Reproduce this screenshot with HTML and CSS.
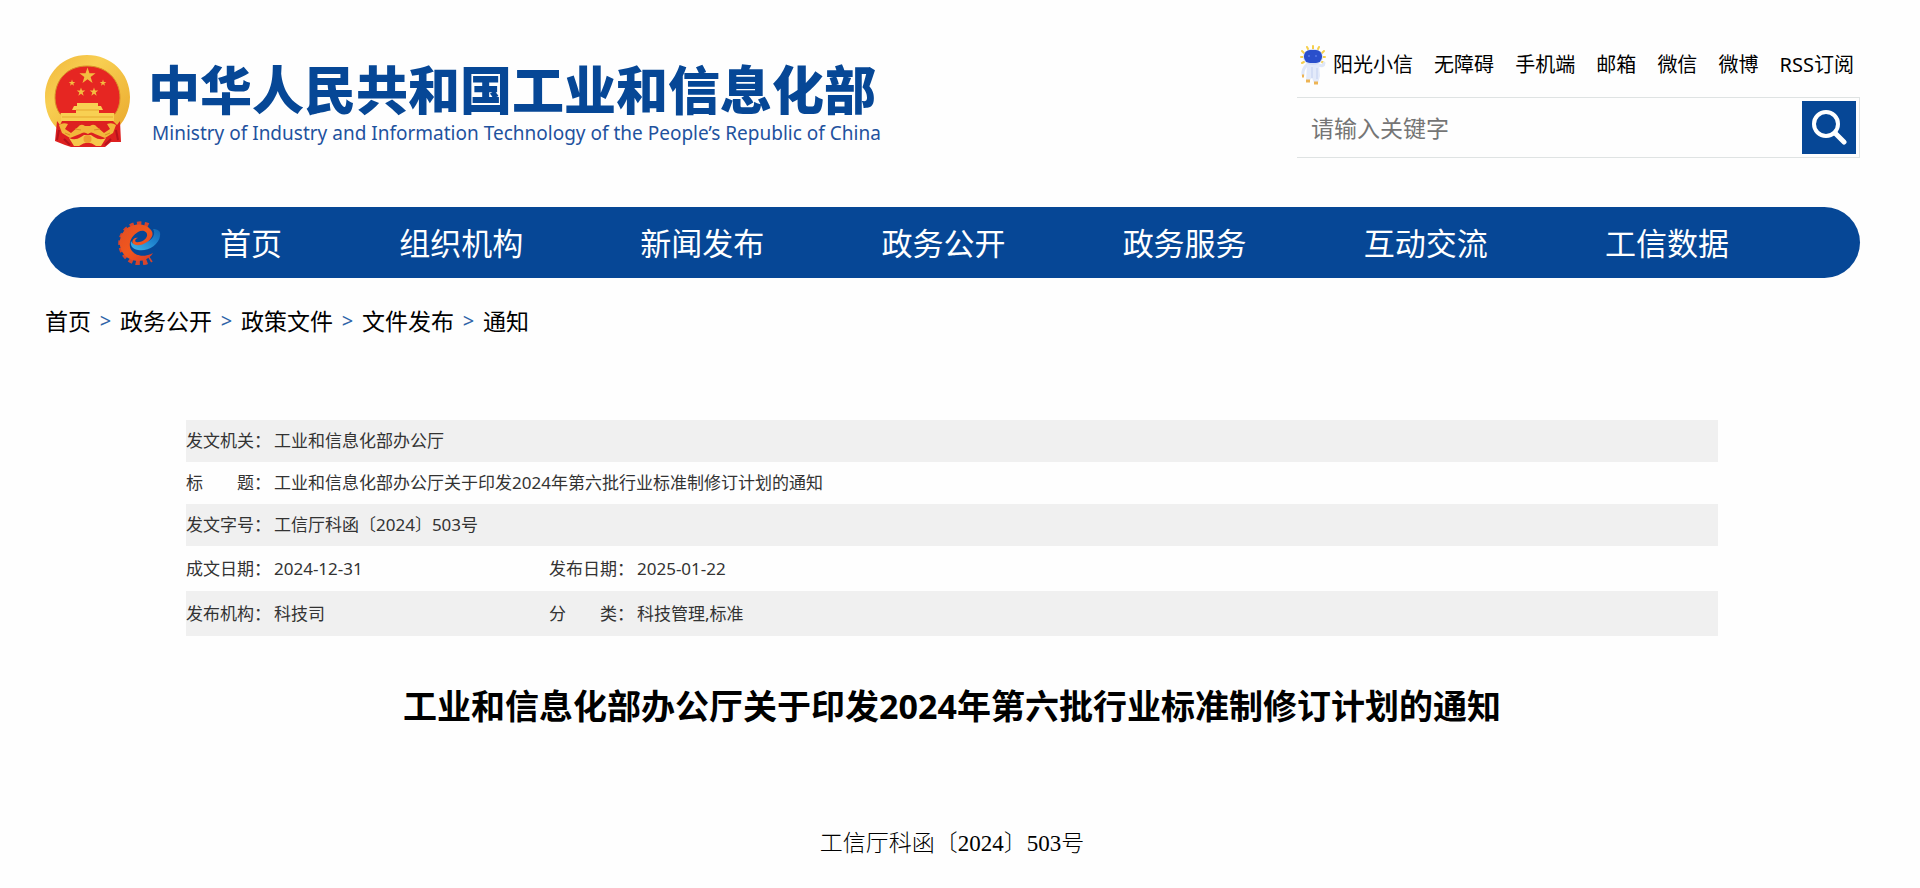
FILE: index.html
```html
<!DOCTYPE html>
<html lang="zh-CN">
<head>
<meta charset="utf-8">
<meta name="viewport" content="width=device-width, initial-scale=1">
<title>工业和信息化部办公厅关于印发2024年第六批行业标准制修订计划的通知</title>
<link rel="stylesheet" href="styles.css">
</head>
<body>
<div class="page">
  <header class="header">
    <a class="brand" href="#">
      <svg class="emblem" viewBox="0 0 85 93" aria-hidden="true">
        <defs>
          <linearGradient id="gold" x1="0" y1="0" x2="1" y2="1">
            <stop offset="0" stop-color="#f0b53a"/><stop offset=".35" stop-color="#f8cf52"/><stop offset="1" stop-color="#eaa92d"/>
          </linearGradient>
          <path id="star" d="M0-10 2.3-3.1 9.5-3.1 3.7 1.2 5.9 8.1 0 3.9-5.9 8.1-3.7 1.2-9.5-3.1-2.3-3.1Z"/>
        </defs>
        <path d="M42 0C66 0 85 18 85 42 85 56 79 68 69 76L54 71H30L15 76C5 68 0 56 0 42 0 18 18 0 42 0Z" fill="url(#gold)"/>
        <path d="M42 11C61 11 75 24 75 43 75 49 73 55 70 59H15C12 55 10 49 10 43 10 24 23 11 42 11Z" fill="#e62622" stroke="#d99128"/>
        <g fill="#f3bd40"><use href="#star" transform="translate(42.500 21) scale(.85)"/><use href="#star" transform="translate(27 28) scale(.35)"/><use href="#star" transform="translate(58 28) scale(.35)"/><use href="#star" transform="translate(36 37) scale(.45)"/><use href="#star" transform="translate(49 37) scale(.45)"/></g>
        <path d="M32 48H53V51H56L58 55H54V58H69V66H16V58H31V55H27L29 51H32Z" fill="#f8d052"/>
        <path d="M31 55H54M17 62H68" stroke="#e6a82e"/>
        <path d="M17 66H68L72 70 75 66 76 87 66 87 60 92H26L20 90 10 86 12 66 15 70Z" fill="#dd2020"/>
        <path d="M14 75 12 85M19 84 25 90M71 75 73 85M66 84 60 90" fill="none" stroke="#b5121b" stroke-width="2"/>
        <path d="M14 70Q18 67 23 69L20 74 26 78 33 72Q36 68 40 71H45Q49 68 52 72L59 78 65 74 62 69Q67 67 71 70L68 78 60 83 50 79Q46 76 43 79 39 76 35 79L25 83 17 78Z" fill="#f2b73b"/>
        <path d="M30 74 36 75M55 74 49 75M20 78 25 80M65 78 60 80" stroke="#d98e26"/>
        <path d="M24 83Q30 86 36 82L39 80H46L49 82Q55 86 61 83L56 91H51Q43 84 34 91H29Z" fill="#f6c84c"/>
        <circle cx="42.500" cy="84" r="4" fill="#ee9d30"/>
      </svg>
      <span class="brand-text">
        <span class="brand-zh">中华人民共和国工业和信息化部</span>
        <span class="brand-en" lang="en">Ministry of Industry and Information Technology of the People’s Republic of China</span>
      </span>
    </a>
    <div class="tools">
      <ul class="links">
        <li><a class="mascot-link" href="#">
          <svg class="mascot" viewBox="0 0 26 40" aria-hidden="true">
            <g stroke="#f6cf4b" stroke-width="2" stroke-linecap="round"><path d="M13 1V4M7 2 8 4M19 2 18 4M2 6 4 8M24 6 22 8M1 12H3M25 12H23M2 18 4 17M24 18 22 17"/></g>
            <path d="M8 19Q2 24 3 30M18 20Q24 22 24 18" fill="none" stroke="#dfe7f8" stroke-width="3" stroke-linecap="round"/>
            <path d="M7 19H19L20 31 18 38H14L12 33 9 36H6Z" fill="#e3eafa"/>
            <path d="M12 22V33M17 23V34" stroke="#c3d0f0"/>
            <ellipse cx="13" cy="12" rx="10" ry="8" fill="#d5def5"/>
            <rect x="4" y="5" width="18" height="13" rx="6" fill="#2a4fcb"/>
            <path d="M8 11H10M15 11H17" stroke="#4a6de0" stroke-width="2"/>
            <path d="M6 36H10M14 38H18M2 31H4" stroke="#edb454" stroke-width="3"/>
          </svg>阳光小信</a></li>
        <li><a href="#">无障碍</a></li>
        <li><a href="#">手机端</a></li>
        <li><a href="#">邮箱</a></li>
        <li><a href="#">微信</a></li>
        <li><a href="#">微博</a></li>
        <li><a href="#">RSS订阅</a></li>
      </ul>
      <form class="search">
        <input class="search-input" type="text" aria-label="请输入关键字" placeholder="请输入关键字">
        <button class="search-button" type="button" aria-label="搜索">
          <svg class="search-icon" viewBox="0 0 36 36" aria-hidden="true"><circle cx="15" cy="14" r="12" fill="none" stroke="#fff" stroke-width="4"/><path d="M24 23 33 32" stroke="#fff" stroke-width="5" stroke-linecap="round"/></svg>
        </button>
      </form>
    </div>
  </header>

  <nav class="nav" aria-label="主导航">
    <svg class="gear" viewBox="0 0 45 44" aria-hidden="true">
      <defs>
        <linearGradient id="swoosh" x1="0" y1="1" x2="1" y2="0"><stop offset="0" stop-color="#42b5e7"/><stop offset=".6" stop-color="#1e82cd"/><stop offset="1" stop-color="#1264ae"/></linearGradient>
        <linearGradient id="flame" x1="0" y1="0" x2="1" y2="1"><stop offset="0" stop-color="#e04e27"/><stop offset=".5" stop-color="#f2571c"/><stop offset="1" stop-color="#d93a29"/></linearGradient>
      </defs>
      <path d="M32 5A19 19 0 1 0 35 38" fill="none" stroke="#d4452d" stroke-width="6" stroke-dasharray="4 3"/>
      <path d="M35 9C29 1 15 2 8 10 1 19 3 31 12 37 22 43 33 39 37 32 30 36 21 36 16 30 11 24 15 15 22 11 27 8 32 11 31 15 30 19 24 22 20 21 18 20 20 17 22 17 18 16 15 20 17 23 21 28 32 23 35 17 37 14 37 12 35 9Z" fill="url(#flame)"/>
      <path d="M37 8C42 8 45 10 44 15 43 24 31 31 22 29 16 28 14 24 15 20 18 26 25 25 31 21 37 18 40 13 37 8Z" fill="url(#swoosh)"/>
    </svg>
    <ul class="nav-list">
      <li><a href="#">首页</a></li>
      <li><a href="#">组织机构</a></li>
      <li><a href="#">新闻发布</a></li>
      <li><a href="#">政务公开</a></li>
      <li><a href="#">政务服务</a></li>
      <li><a href="#">互动交流</a></li>
      <li><a href="#">工信数据</a></li>
    </ul>
  </nav>

  <nav class="crumbs" aria-label="当前位置">
    <a href="#">首页</a><span class="sep">&gt;</span><a href="#">政务公开</a><span class="sep">&gt;</span><a href="#">政策文件</a><span class="sep">&gt;</span><a href="#">文件发布</a><span class="sep">&gt;</span><a href="#">通知</a>
  </nav>

  <main class="article">
    <table class="meta">
      <colgroup><col class="col-label"><col class="col-value"><col class="col-label"><col></colgroup>
      <tbody>
        <tr class="shaded"><th scope="row">发文机关：</th><td colspan="3">工业和信息化部办公厅</td></tr>
        <tr><th scope="row">标　　题：</th><td colspan="3">工业和信息化部办公厅关于印发2024年第六批行业标准制修订计划的通知</td></tr>
        <tr class="shaded"><th scope="row">发文字号：</th><td colspan="3">工信厅科函〔2024〕503号</td></tr>
        <tr class="tall"><th scope="row">成文日期：</th><td>2024-12-31</td><th scope="row">发布日期：</th><td>2025-01-22</td></tr>
        <tr class="shaded tall"><th scope="row">发布机构：</th><td>科技司</td><th scope="row">分　　类：</th><td>科技管理,标准</td></tr>
      </tbody>
    </table>
    <h1 class="title">工业和信息化部办公厅关于印发2024年第六批行业标准制修订计划的通知</h1>
    <p class="doc-number">工信厅科函〔2024〕503号</p>
  </main>
</div>
</body>
</html>
```

FILE: styles.css
```css
* {
  box-sizing: border-box;
}

body {
  margin: 0;
  background: #fefefe;
  color: #000;
  font-family: "Noto Sans", "Noto Sans CJK SC", sans-serif;
}

a {
  color: inherit;
  text-decoration: none;
}

ul {
  list-style: none;
  margin: 0;
  padding: 0;
}

.page {
  padding: 44px 60px 24px 45px;
}

.header {
  display: flex;
  justify-content: space-between;
  align-items: flex-start;
}

.brand {
  display: flex;
  gap: 18px;
  padding-top: 11px;
  color: #064796;
  white-space: nowrap;
}

.emblem {
  width: 85px;
  height: 93px;
}

.brand-text {
  display: flex;
  flex-direction: column;
  padding-top: 9px;
}

.brand-zh {
  font-family: "Liberation Sans", "Noto Sans CJK SC", sans-serif;
  font-size: 52px;
  line-height: 57px;
  font-weight: 900;
}

.brand-en {
  padding-left: 4px;
  font-size: 19px;
  line-height: 24px;
  color: #1f529e;
}

.tools {
  width: 563px;
}

.links {
  display: flex;
  justify-content: space-between;
  padding: 0 6px 0 3px;
  font-size: 20px;
  line-height: 42px;
  white-space: nowrap;
}

.mascot-link {
  display: flex;
  align-items: center;
  gap: 7px;
}

.mascot {
  width: 26px;
  height: 40px;
}

.search {
  display: flex;
  align-items: center;
  height: 61px;
  margin-top: 11px;
  padding-right: 3px;
  border: 1px solid #dfe3e3;
  border-left: 0;
}

.search-input {
  flex: 1;
  min-width: 0;
  padding: 0 14px;
  border: 0;
  background: transparent;
  font: inherit;
  font-size: 23px;
}

.search-input::placeholder {
  color: #757575;
}

.search-button {
  display: flex;
  align-items: center;
  justify-content: center;
  width: 54px;
  height: 53px;
  padding: 0;
  border: 0;
  background: #064796;
}

.search-icon {
  width: 36px;
  height: 36px;
}

.nav {
  display: flex;
  align-items: center;
  gap: 59px;
  height: 71px;
  margin-top: 49px;
  padding: 0 131px 0 71px;
  border-radius: 36px;
  background: #064796;
  color: #fff;
}

.gear {
  flex: none;
  width: 45px;
  height: 44px;
}

.nav-list {
  display: flex;
  flex: 1;
  justify-content: space-between;
  font-size: 31px;
  line-height: 40px;
  white-space: nowrap;
}

.crumbs {
  display: flex;
  margin-top: 27px;
  font-size: 23px;
  line-height: 32px;
}

.sep {
  width: 29px;
  text-align: center;
  font-size: 20px;
  color: #2f64a8;
}

.article {
  margin: 83px 142px 0 141px;
}

.meta {
  width: 100%;
  border-collapse: collapse;
  table-layout: fixed;
  color: #333;
  font-size: 17px;
  line-height: 24px;
}

.meta tr {
  height: 42px;
}

.meta .tall {
  height: 45px;
}

.meta th,
.meta td {
  padding: 0;
  text-align: left;
  font-weight: 400;
}

.shaded {
  background: #f0f0f0;
}

.col-label {
  width: 88px;
}

.col-value {
  width: 275px;
}

.title {
  margin: 46px 0 0;
  font-size: 34px;
  line-height: 48px;
  font-weight: 700;
  text-align: center;
}

.doc-number {
  margin: 98px 0 0;
  font-family: "Liberation Serif", "Noto Sans CJK SC", serif;
  font-size: 23px;
  line-height: 32px;
  font-weight: 300;
  text-align: center;
}
```
